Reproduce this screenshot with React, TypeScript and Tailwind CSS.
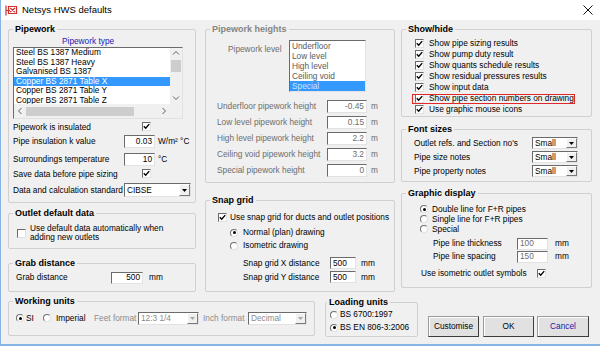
import React from "react";

const sunken =
  "border border-t-[#6b6b6b] border-l-[#6b6b6b] border-b-[#e2e2e2] border-r-[#e2e2e2]";

const Check = ({ on = true }: { on?: boolean }) => (
  <span className={`inline-flex w-[9px] h-[9px] shrink-0 bg-white items-center justify-center ${sunken}`}>
    {on && (
      <svg width="7" height="7" viewBox="0 0 7 7">
        <path d="M0.8 3.3 L2.7 5.3 L6.2 1.1" fill="none" stroke="#000" strokeWidth="1.4" />
      </svg>
    )}
  </span>
);

const Radio = ({ on = false }: { on?: boolean }) => (
  <span className="inline-flex w-[8px] h-[8px] shrink-0 rounded-full bg-white items-center justify-center border border-t-[#707070] border-l-[#707070] border-b-[#e0e0e0] border-r-[#e0e0e0]">
    {on && <span className="w-[3px] h-[3px] rounded-full bg-black" />}
  </span>
);

const Field = ({
  value,
  className = "",
  left = false,
  dim = false,
}: {
  value: string;
  className?: string;
  left?: boolean;
  dim?: boolean;
}) => (
  <span
    className={`flex items-center h-[12px] bg-white px-[2px] ${sunken} ${left ? "justify-start" : "justify-end"} ${dim ? "text-[#6d6d6d]" : "text-black"} ${className}`}
  >
    {value}
  </span>
);

const Arrow = ({ dim = false }: { dim?: boolean }) => (
  <span className="w-[11px] shrink-0 flex items-center justify-center bg-[#f0f0f0] border border-t-white border-l-white border-b-[#7a7a7a] border-r-[#7a7a7a]">
    <svg width="5" height="3" viewBox="0 0 5 3">
      <path d="M0 0H5L2.5 3Z" fill={dim ? "#a6a6a6" : "#000"} />
    </svg>
  </span>
);

const Combo = ({
  value,
  className = "",
  dim = false,
}: {
  value: string;
  className?: string;
  dim?: boolean;
}) => (
  <span className={`flex items-stretch bg-white ${sunken} ${className}`}>
    <span className={`flex-1 flex items-center pl-[2px] whitespace-nowrap ${dim ? "text-[#8a8a8a]" : ""}`}>
      {value}
    </span>
    <Arrow dim={dim} />
  </span>
);

const Group = ({
  title,
  dim = false,
  className = "",
  children,
}: {
  title: string;
  dim?: boolean;
  className?: string;
  children?: React.ReactNode;
}) => (
  <fieldset className={`border border-[#d0d0d0] rounded-[2px] px-[4px] ${className}`}>
    <legend
      className={`px-[2px] text-[9px] font-bold leading-[12px] ${dim ? "text-[#858585]" : "text-black"}`}
    >
      {title}
    </legend>
    {children}
  </fieldset>
);

const Chevron = ({ dir }: { dir: "up" | "down" | "left" | "right" }) => {
  const d = {
    up: "M1 4.5 L4 1.5 L7 4.5",
    down: "M1 1.5 L4 4.5 L7 1.5",
    left: "M4.5 1 L1.5 4 L4.5 7",
    right: "M1.5 1 L4.5 4 L1.5 7",
  }[dir];
  const vert = dir === "up" || dir === "down";
  return (
    <svg width={vert ? 8 : 6} height={vert ? 6 : 8} viewBox={vert ? "0 0 8 6" : "0 0 6 8"}>
      <path d={d} fill="none" stroke="#606060" strokeWidth="1" />
    </svg>
  );
};

const pipeTypes = [
  "Steel BS 1387 Medium",
  "Steel BS 1387 Heavy",
  "Galvanised BS 1387",
  "Copper BS 2871 Table X",
  "Copper BS 2871 Table Y",
  "Copper BS 2871 Table Z",
];

const levels = ["Underfloor", "Low level", "High level", "Ceiling void", "Special"];

const heights = [
  ["Underfloor pipework height", "-0.45"],
  ["Low level pipework height", "0.15"],
  ["High level pipework height", "2.2"],
  ["Ceiling void pipework height", "3.2"],
  ["Special pipework height", "0"],
];

const showHide = [
  "Show pipe sizing results",
  "Show pump duty result",
  "Show quants schedule results",
  "Show residual pressures results",
  "Show input data",
  "Show pipe section numbers on drawing",
  "Use graphic mouse icons",
];

const fontRows = ["Outlet refs. and Section no's", "Pipe size notes", "Pipe property notes"];

export default function App() {
  return (
    <div className="w-[600px] h-[347px] overflow-hidden bg-white font-['Liberation_Sans',Arial,sans-serif] text-[8.3px] leading-none text-black select-none">
      <div className="h-[346px] flex flex-col border-l border-b-2 border-[#86b4e4] bg-[#f0f0f0]">
        {/* title bar */}
        <div className="h-[20px] shrink-0 bg-white flex items-center pl-[4px] pr-[7px]">
          <svg width="13" height="11" viewBox="0 0 13 11">
            <path
              d="M1 0.5v10M1 5.5h4M3.5 1.5h8v7h-8zM5 3l5 4M10 3L5 7"
              fill="none"
              stroke="#d0302c"
              strokeWidth="1.2"
            />
          </svg>
          <span className="ml-[4px] text-[9.5px]">Netsys HWS defaults</span>
          <svg className="ml-auto" width="10" height="10" viewBox="0 0 10 10">
            <path d="M0.5 0.5L9.5 9.5M9.5 0.5L0.5 9.5" stroke="#111" strokeWidth="1" />
          </svg>
        </div>

        {/* three columns */}
        <div className="flex pl-[7px] pt-[3px]">
          {/* COLUMN 1 */}
          <div className="w-[188px] flex flex-col">
            <Group title="Pipework" className="h-[180px]">
              <div className="h-[12px] flex items-center pl-[49px] text-[#1a1ab8]">Pipework type</div>
              <div className={`w-[170px] h-[72px] bg-white flex flex-col ${sunken}`}>
                <div className="flex h-[56px]">
                  <div className="flex-1 overflow-hidden">
                    {pipeTypes.map((t, i) => (
                      <div
                        key={t}
                        className={`h-[9.6px] leading-[9.6px] pl-[2px] whitespace-nowrap ${i === 3 ? "bg-[#3399ff] text-white" : ""}`}
                      >
                        {t}
                      </div>
                    ))}
                  </div>
                  <div className="w-[12px] bg-[#f0f0f0] flex flex-col items-center">
                    <div className="h-[10px] flex items-center">
                      <Chevron dir="up" />
                    </div>
                    <div className="w-[10px] h-[12px] mt-[2px] bg-[#cdcdcd]" />
                    <div className="flex-1" />
                    <div className="h-[12px] flex items-center">
                      <Chevron dir="down" />
                    </div>
                  </div>
                </div>
                <div className="flex h-[14px] bg-[#f0f0f0]">
                  <div className="w-[12px] flex items-center justify-center">
                    <Chevron dir="left" />
                  </div>
                  <div className="w-[108px] h-[9px] self-center bg-[#cdcdcd]" />
                  <div className="flex-1" />
                  <div className="w-[12px] flex items-center justify-center">
                    <Chevron dir="right" />
                  </div>
                  <div className="w-[12px]" />
                </div>
              </div>
              <div className="mt-[1px] h-[14px] flex items-center">
                <span className="w-[111px]">Pipework is insulated</span>
                <span className="ml-[18px]">
                  <Check />
                </span>
              </div>
              <div className="h-[15px] flex items-center">
                <span className="w-[111px]">Pipe insulation k value</span>
                <Field value="0.03" className="w-[31px] h-[13px]" />
                <span className="ml-[3px]">W/m² °C</span>
              </div>
              <div className="mt-[3px] h-[15px] flex items-center">
                <span className="w-[111px]">Surroundings temperature</span>
                <Field value="10" className="w-[31px] h-[13px]" />
                <span className="ml-[3px]">°C</span>
              </div>
              <div className="h-[14px] flex items-center">
                <span className="w-[111px]">Save data before pipe sizing</span>
                <span className="ml-[18px]">
                  <Check />
                </span>
              </div>
              <div className="mt-[2px] h-[14px] flex items-center">
                <span className="w-[111px]">Data and calculation standard</span>
                <Combo value="CIBSE" className="w-[67px] h-[14px]" />
              </div>
            </Group>

            <Group title="Outlet default data" className="mt-[4px] h-[42px]">
              <div className="mt-[5px] flex items-center pl-[4px]">
                <Check on={false} />
                <div className="ml-[4px] leading-[9px]">
                  <div>Use default data automatically when</div>
                  <div>adding new outlets</div>
                </div>
              </div>
            </Group>

            <Group title="Grab distance" className="mt-[8px] h-[35px]">
              <div className="mt-[2px] h-[13px] flex items-center pl-[3px]">
                <span className="w-[95px]">Grab distance</span>
                <Field value="500" className="w-[32px]" />
                <span className="ml-[6px]">mm</span>
              </div>
            </Group>
          </div>

          {/* COLUMN 2 */}
          <div className="w-[190px] ml-[9px] flex flex-col">
            <Group title="Pipework heights" dim className="h-[160px]">
              <div className="mt-[5px] flex items-start">
                <span className="ml-[18px] w-[61px] pt-[5px] text-[#6d6d6d]">Pipework level</span>
                <div className={`w-[77px] h-[52px] bg-white ${sunken}`}>
                  {levels.map((t, i) => (
                    <div
                      key={t}
                      className={`h-[10px] leading-[10px] pl-[2px] ${i === 4 ? "bg-[#3399ff] text-[#cfe3fa]" : "text-[#5a5a5a]"}`}
                    >
                      {t}
                    </div>
                  ))}
                </div>
              </div>
              <div className="mt-[6px] flex flex-col">
                {heights.map(([label, v]) => (
                  <div key={label} className="h-[16px] flex items-center text-[#6d6d6d]">
                    <span className="ml-[7px] w-[110px]">{label}</span>
                    <Field value={v} dim className="w-[40px] h-[13px]" />
                    <span className="ml-[4px]">m</span>
                  </div>
                ))}
              </div>
            </Group>

            <Group title="Snap grid" className="mt-[11px] h-[98px]">
              <div className="mt-[5px] h-[12px] flex items-center pl-[8px]">
                <Check />
                <span className="ml-[3px] whitespace-nowrap">Use snap grid for ducts and outlet positions</span>
              </div>
              <div className="mt-[3px] h-[13px] flex items-center pl-[20px]">
                <Radio on />
                <span className="ml-[5px]">Normal (plan) drawing</span>
              </div>
              <div className="h-[13px] flex items-center pl-[20px]">
                <Radio />
                <span className="ml-[5px]">Isometric drawing</span>
              </div>
              <div className="mt-[4px] h-[14px] flex items-center pl-[33px]">
                <span className="w-[87px]">Snap grid X distance</span>
                <Field value="500" left className="w-[26px]" />
                <span className="ml-[5px]">mm</span>
              </div>
              <div className="h-[14px] flex items-center pl-[33px]">
                <span className="w-[87px]">Snap grid Y distance</span>
                <Field value="500" left className="w-[26px]" />
                <span className="ml-[5px]">mm</span>
              </div>
            </Group>
          </div>

          {/* COLUMN 3 */}
          <div className="w-[191px] ml-[6px] flex flex-col">
            <Group title="Show/hide" className="h-[94px]">
              <div className="mt-[3px] flex flex-col">
                {showHide.map((t, i) => (
                  <div key={t} className="relative h-[11px] flex items-center pl-[9px]">
                    <Check />
                    <span className="ml-[5px] whitespace-nowrap">{t}</span>
                    {i === 5 && (
                      <span className="absolute left-[6px] top-[1px] w-[163px] h-[10px] border border-[#e0282a]" />
                    )}
                  </div>
                ))}
              </div>
            </Group>

            <Group title="Font sizes" className="mt-[6px] h-[59px]">
              <div className="mt-[1px] flex flex-col">
                {fontRows.map((t) => (
                  <div key={t} className="h-[14px] flex items-center pl-[8px]">
                    <span className="w-[118px]">{t}</span>
                    <Combo value="Small" className="w-[46px] h-[12px]" />
                  </div>
                ))}
              </div>
            </Group>

            <Group title="Graphic display" className="mt-[5px] h-[101px]">
              <div className="mt-[5px] flex flex-col">
                {[
                  ["Double line for F+R pipes", true],
                  ["Single line for F+R pipes", false],
                  ["Special", false],
                ].map(([t, on]) => (
                  <div key={t as string} className="h-[10px] flex items-center pl-[14px]">
                    <Radio on={on as boolean} />
                    <span className="ml-[4px]">{t as string}</span>
                  </div>
                ))}
              </div>
              <div className="mt-[3px] h-[13px] flex items-center pl-[27px]">
                <span className="w-[84px]">Pipe line thickness</span>
                <Field value="100" left dim className="w-[31px]" />
                <span className="ml-[7px]">mm</span>
              </div>
              <div className="h-[13px] flex items-center pl-[27px]">
                <span className="w-[84px]">Pipe line spacing</span>
                <Field value="150" left dim className="w-[31px]" />
                <span className="ml-[7px]">mm</span>
              </div>
              <div className="mt-[4px] h-[12px] flex items-center pl-[15px]">
                <span className="w-[116px]">Use isometric outlet symbols</span>
                <Check />
              </div>
            </Group>
          </div>
        </div>

        {/* bottom row */}
        <div className="flex items-start pl-[7px] mt-[3px]">
          <Group title="Working units" className="w-[307px] h-[41px]">
            <div className="mt-[5px] h-[13px] flex items-center">
              <span className="w-[30px] pl-[3px] flex items-center">
                <Radio on />
                <span className="ml-[2px]">SI</span>
              </span>
              <span className="w-[51px] flex items-center">
                <Radio />
                <span className="ml-[5px]">Imperial</span>
              </span>
              <span className="w-[44px] text-[#8d8d8d]">Feet format</span>
              <Combo value="12:3 1/4" dim className="w-[61px] h-[13px]" />
              <span className="ml-[4px] w-[45px] text-[#8d8d8d]">Inch format</span>
              <Combo value="Decimal" dim className="w-[59px] h-[13px]" />
            </div>
          </Group>

          <Group title="Loading units" className="ml-[10px] mt-[1px] w-[93px] h-[41px] !pl-[1px]">
            <div className="pl-[3px]">
              <div className="h-[13px] flex items-center">
                <Radio />
                <span className="ml-[2px]">BS 6700:1997</span>
              </div>
              <div className="h-[13px] flex items-center">
                <Radio on />
                <span className="ml-[2px] whitespace-nowrap">BS EN 806-3:2006</span>
              </div>
            </div>
          </Group>

          <div className="flex mt-[21px] ml-[10px]">
            {[
              ["Customise", "w-[51px]", "text-black"],
              ["OK", "w-[51px] ml-[4px]", "text-black"],
              ["Cancel", "w-[52px] ml-[3px]", "text-[#1a1aa8]"],
            ].map(([t, w, c]) => (
              <button
                key={t}
                className={`h-[21px] flex items-center justify-center bg-[#e1e1e1] border border-[#9a9a9a] border-b-[#3c3c3c] border-r-[#3c3c3c] shadow-[inset_1px_1px_0_#fff] ${w} ${c}`}
              >
                {t}
              </button>
            ))}
          </div>
        </div>
      </div>
    </div>
  );
}
